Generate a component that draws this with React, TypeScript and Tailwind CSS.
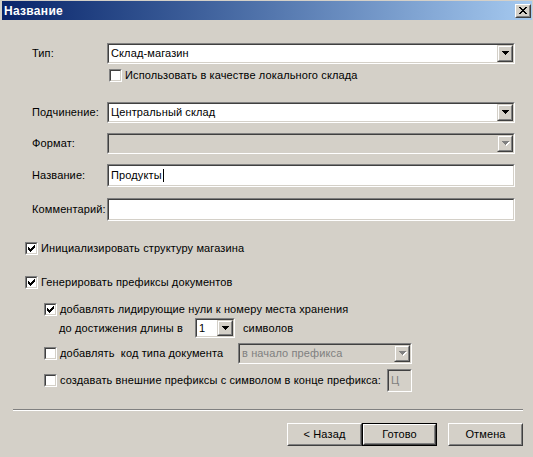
import React from "react";

const Sunken = ({
  className = "",
  inner = "bg-white",
  children,
}: {
  className?: string;
  inner?: string;
  children?: React.ReactNode;
}) => (
  <div className={"border border-t-[#808080] border-l-[#808080] border-b-white border-r-white " + className}>
    <div className={"h-full w-full border border-t-[#404040] border-l-[#404040] border-b-[#d4d0c8] border-r-[#d4d0c8] " + inner}>
      {children}
    </div>
  </div>
);

const Arrow = ({ disabled }: { disabled?: boolean }) => (
  <svg width="8" height="5" viewBox="0 0 8 5" shapeRendering="crispEdges">
    {disabled && (
      <g fill="#ffffff">
        <rect x="1" y="1" width="7" height="1" />
        <rect x="2" y="2" width="5" height="1" />
        <rect x="3" y="3" width="3" height="1" />
        <rect x="4" y="4" width="1" height="1" />
      </g>
    )}
    <g fill={disabled ? "#808080" : "#000000"}>
      <rect x="0" y="0" width="7" height="1" />
      <rect x="1" y="1" width="5" height="1" />
      <rect x="2" y="2" width="3" height="1" />
      <rect x="3" y="3" width="1" height="1" />
    </g>
  </svg>
);

const ArrowBtn = ({ disabled }: { disabled?: boolean }) => (
  <div className="h-full w-[16px] shrink-0 border border-t-[#d4d0c8] border-l-[#d4d0c8] border-b-[#404040] border-r-[#404040] bg-[#d4d0c8]">
    <div className="h-full w-full border border-t-white border-l-white border-b-[#808080] border-r-[#808080] flex items-center justify-center pl-[1px]">
      <Arrow disabled={disabled} />
    </div>
  </div>
);

const Combo = ({
  className = "",
  value,
  disabled,
}: {
  className?: string;
  value?: string;
  disabled?: boolean;
}) => (
  <Sunken
    className={className}
    inner={(disabled ? "bg-[#d4d0c8] text-[#808080]" : "bg-white text-black") + " flex items-stretch"}
  >
    <div className="flex-1 flex items-center pl-[2px] whitespace-nowrap overflow-hidden">{value}</div>
    <ArrowBtn disabled={disabled} />
  </Sunken>
);

const Check = ({ checked }: { checked?: boolean }) => (
  <Sunken className="w-[13px] h-[13px] shrink-0" inner="bg-white flex items-center justify-center">
    {checked && (
      <svg width="7" height="7" viewBox="0 0 7 7" shapeRendering="crispEdges" fill="#000">
        <rect x="0" y="2" width="1" height="3" />
        <rect x="1" y="3" width="1" height="3" />
        <rect x="2" y="4" width="1" height="3" />
        <rect x="3" y="3" width="1" height="3" />
        <rect x="4" y="2" width="1" height="3" />
        <rect x="5" y="1" width="1" height="3" />
        <rect x="6" y="0" width="1" height="3" />
      </svg>
    )}
  </Sunken>
);

const Btn = ({ children, def }: { children: React.ReactNode; def?: boolean }) =>
  def ? (
    <div className="w-[75px] h-[23px] border border-black">
      <div className="h-full w-full border border-t-white border-l-white border-b-[#404040] border-r-[#404040]">
        <div className="h-full w-full border border-t-[#d4d0c8] border-l-[#d4d0c8] border-b-[#808080] border-r-[#808080] flex items-center justify-center">
          {children}
        </div>
      </div>
    </div>
  ) : (
    <div className="w-[75px] h-[23px] border border-t-white border-l-white border-b-[#404040] border-r-[#404040]">
      <div className="h-full w-full border border-t-[#d4d0c8] border-l-[#d4d0c8] border-b-[#808080] border-r-[#808080] flex items-center justify-center">
        {children}
      </div>
    </div>
  );

const Label = ({ children }: { children: React.ReactNode }) => (
  <div className="w-[107px] shrink-0 pl-[32px] whitespace-nowrap">{children}</div>
);

export default function App() {
  return (
    <div className="w-[533px] h-[457px] bg-[#d4d0c8] overflow-hidden text-[11px] tracking-[0.12px] leading-none text-black font-['Liberation_Sans',Arial,sans-serif] flex flex-col">
      {/* Title bar */}
      <div className="mt-[1px] ml-[2px] w-[530px] h-[19px] shrink-0 bg-gradient-to-r from-[#0a246a] to-[#a6caf0] flex items-center">
        <div className="pl-[2px] text-white font-bold text-[12px] tracking-[0.3px]">Название</div>
        <div className="ml-auto mr-[1px] w-[16px] h-[14px] border border-t-white border-l-white border-b-[#404040] border-r-[#404040] bg-[#d4d0c8]">
          <div className="h-full w-full border border-t-[#d4d0c8] border-l-[#d4d0c8] border-b-[#808080] border-r-[#808080] flex items-center justify-center">
            <svg width="8" height="7" viewBox="0 0 8 7" shapeRendering="crispEdges" fill="#000">
              <rect x="0" y="0" width="2" height="1" />
              <rect x="6" y="0" width="2" height="1" />
              <rect x="1" y="1" width="2" height="1" />
              <rect x="5" y="1" width="2" height="1" />
              <rect x="2" y="2" width="4" height="1" />
              <rect x="3" y="3" width="2" height="1" />
              <rect x="2" y="4" width="4" height="1" />
              <rect x="1" y="5" width="2" height="1" />
              <rect x="5" y="5" width="2" height="1" />
              <rect x="0" y="6" width="2" height="1" />
              <rect x="6" y="6" width="2" height="1" />
            </svg>
          </div>
        </div>
      </div>

      {/* Тип */}
      <div className="mt-[23px] h-[21px] flex items-center">
        <Label>Тип:</Label>
        <Combo className="w-[408px] h-[21px]" value="Склад-магазин" />
      </div>

      {/* local checkbox */}
      <div className="mt-[5px] h-[13px] flex items-center pl-[109px] gap-[3px]">
        <Check />
        <span className="whitespace-nowrap">Использовать в качестве локального склада</span>
      </div>

      {/* Подчинение */}
      <div className="mt-[20px] h-[21px] flex items-center">
        <Label>Подчинение:</Label>
        <Combo className="w-[408px] h-[21px]" value="Центральный склад" />
      </div>

      {/* Формат */}
      <div className="mt-[10px] h-[21px] flex items-center">
        <Label>Формат:</Label>
        <Combo className="w-[408px] h-[21px]" disabled />
      </div>

      {/* Название */}
      <div className="mt-[10px] h-[23px] flex items-center">
        <Label>Название:</Label>
        <Sunken className="w-[408px] h-[23px]" inner="bg-white flex items-center pl-[2px]">
          <span>Продукты</span>
          <span className="w-[1px] h-[13px] bg-black ml-[1px]" />
        </Sunken>
      </div>

      {/* Комментарий */}
      <div className="mt-[11px] h-[23px] flex items-center">
        <Label>Комментарий:</Label>
        <Sunken className="w-[408px] h-[23px]" />
      </div>

      {/* Init */}
      <div className="mt-[21px] h-[13px] flex items-center pl-[25px] gap-[3px]">
        <Check checked />
        <span className="whitespace-nowrap">Инициализировать структуру магазина</span>
      </div>

      {/* Generate */}
      <div className="mt-[21px] h-[13px] flex items-center pl-[25px] gap-[3px]">
        <Check checked />
        <span className="whitespace-nowrap">Генерировать префиксы документов</span>
      </div>

      {/* sub1 */}
      <div className="mt-[14px] h-[13px] flex items-center pl-[44px] gap-[3px]">
        <Check checked />
        <span className="whitespace-nowrap">добавлять лидирующие нули к номеру места хранения</span>
      </div>

      {/* length */}
      <div className="mt-[2px] h-[20px] flex items-center pl-[59px]">
        <span className="w-[136px] whitespace-nowrap">до достижения длины в</span>
        <Combo className="w-[40px] h-[20px]" value="1" />
        <span className="ml-[8px] whitespace-nowrap">символов</span>
      </div>

      {/* sub2 */}
      <div className="mt-[5px] h-[21px] flex items-center pl-[44px]">
        <Check />
        <span className="ml-[3px] w-[178px] whitespace-pre">добавлять  код типа документа</span>
        <Combo className="w-[174px] h-[21px]" value="в начало префикса" disabled />
      </div>

      {/* sub3 */}
      <div className="mt-[5px] h-[23px] flex items-center pl-[44px]">
        <Check />
        <span className="ml-[3px] w-[327px] whitespace-nowrap">создавать внешние префиксы с символом в конце префикса:</span>
        <Sunken className="w-[25px] h-[23px]" inner="bg-[#d4d0c8] text-[#808080] flex items-center pl-[2px]">
          Ц
        </Sunken>
      </div>

      {/* separator */}
      <div className="mt-[17px] ml-[13px] w-[510px] h-[2px] border-t border-t-[#808080] border-b border-b-white shrink-0" />

      {/* buttons */}
      <div className="mt-[12px] flex pl-[287px]">
        <Btn>&lt; Назад</Btn>
        <Btn def>Готово</Btn>
        <div className="ml-[11px]">
          <Btn>Отмена</Btn>
        </div>
      </div>
    </div>
  );
}
